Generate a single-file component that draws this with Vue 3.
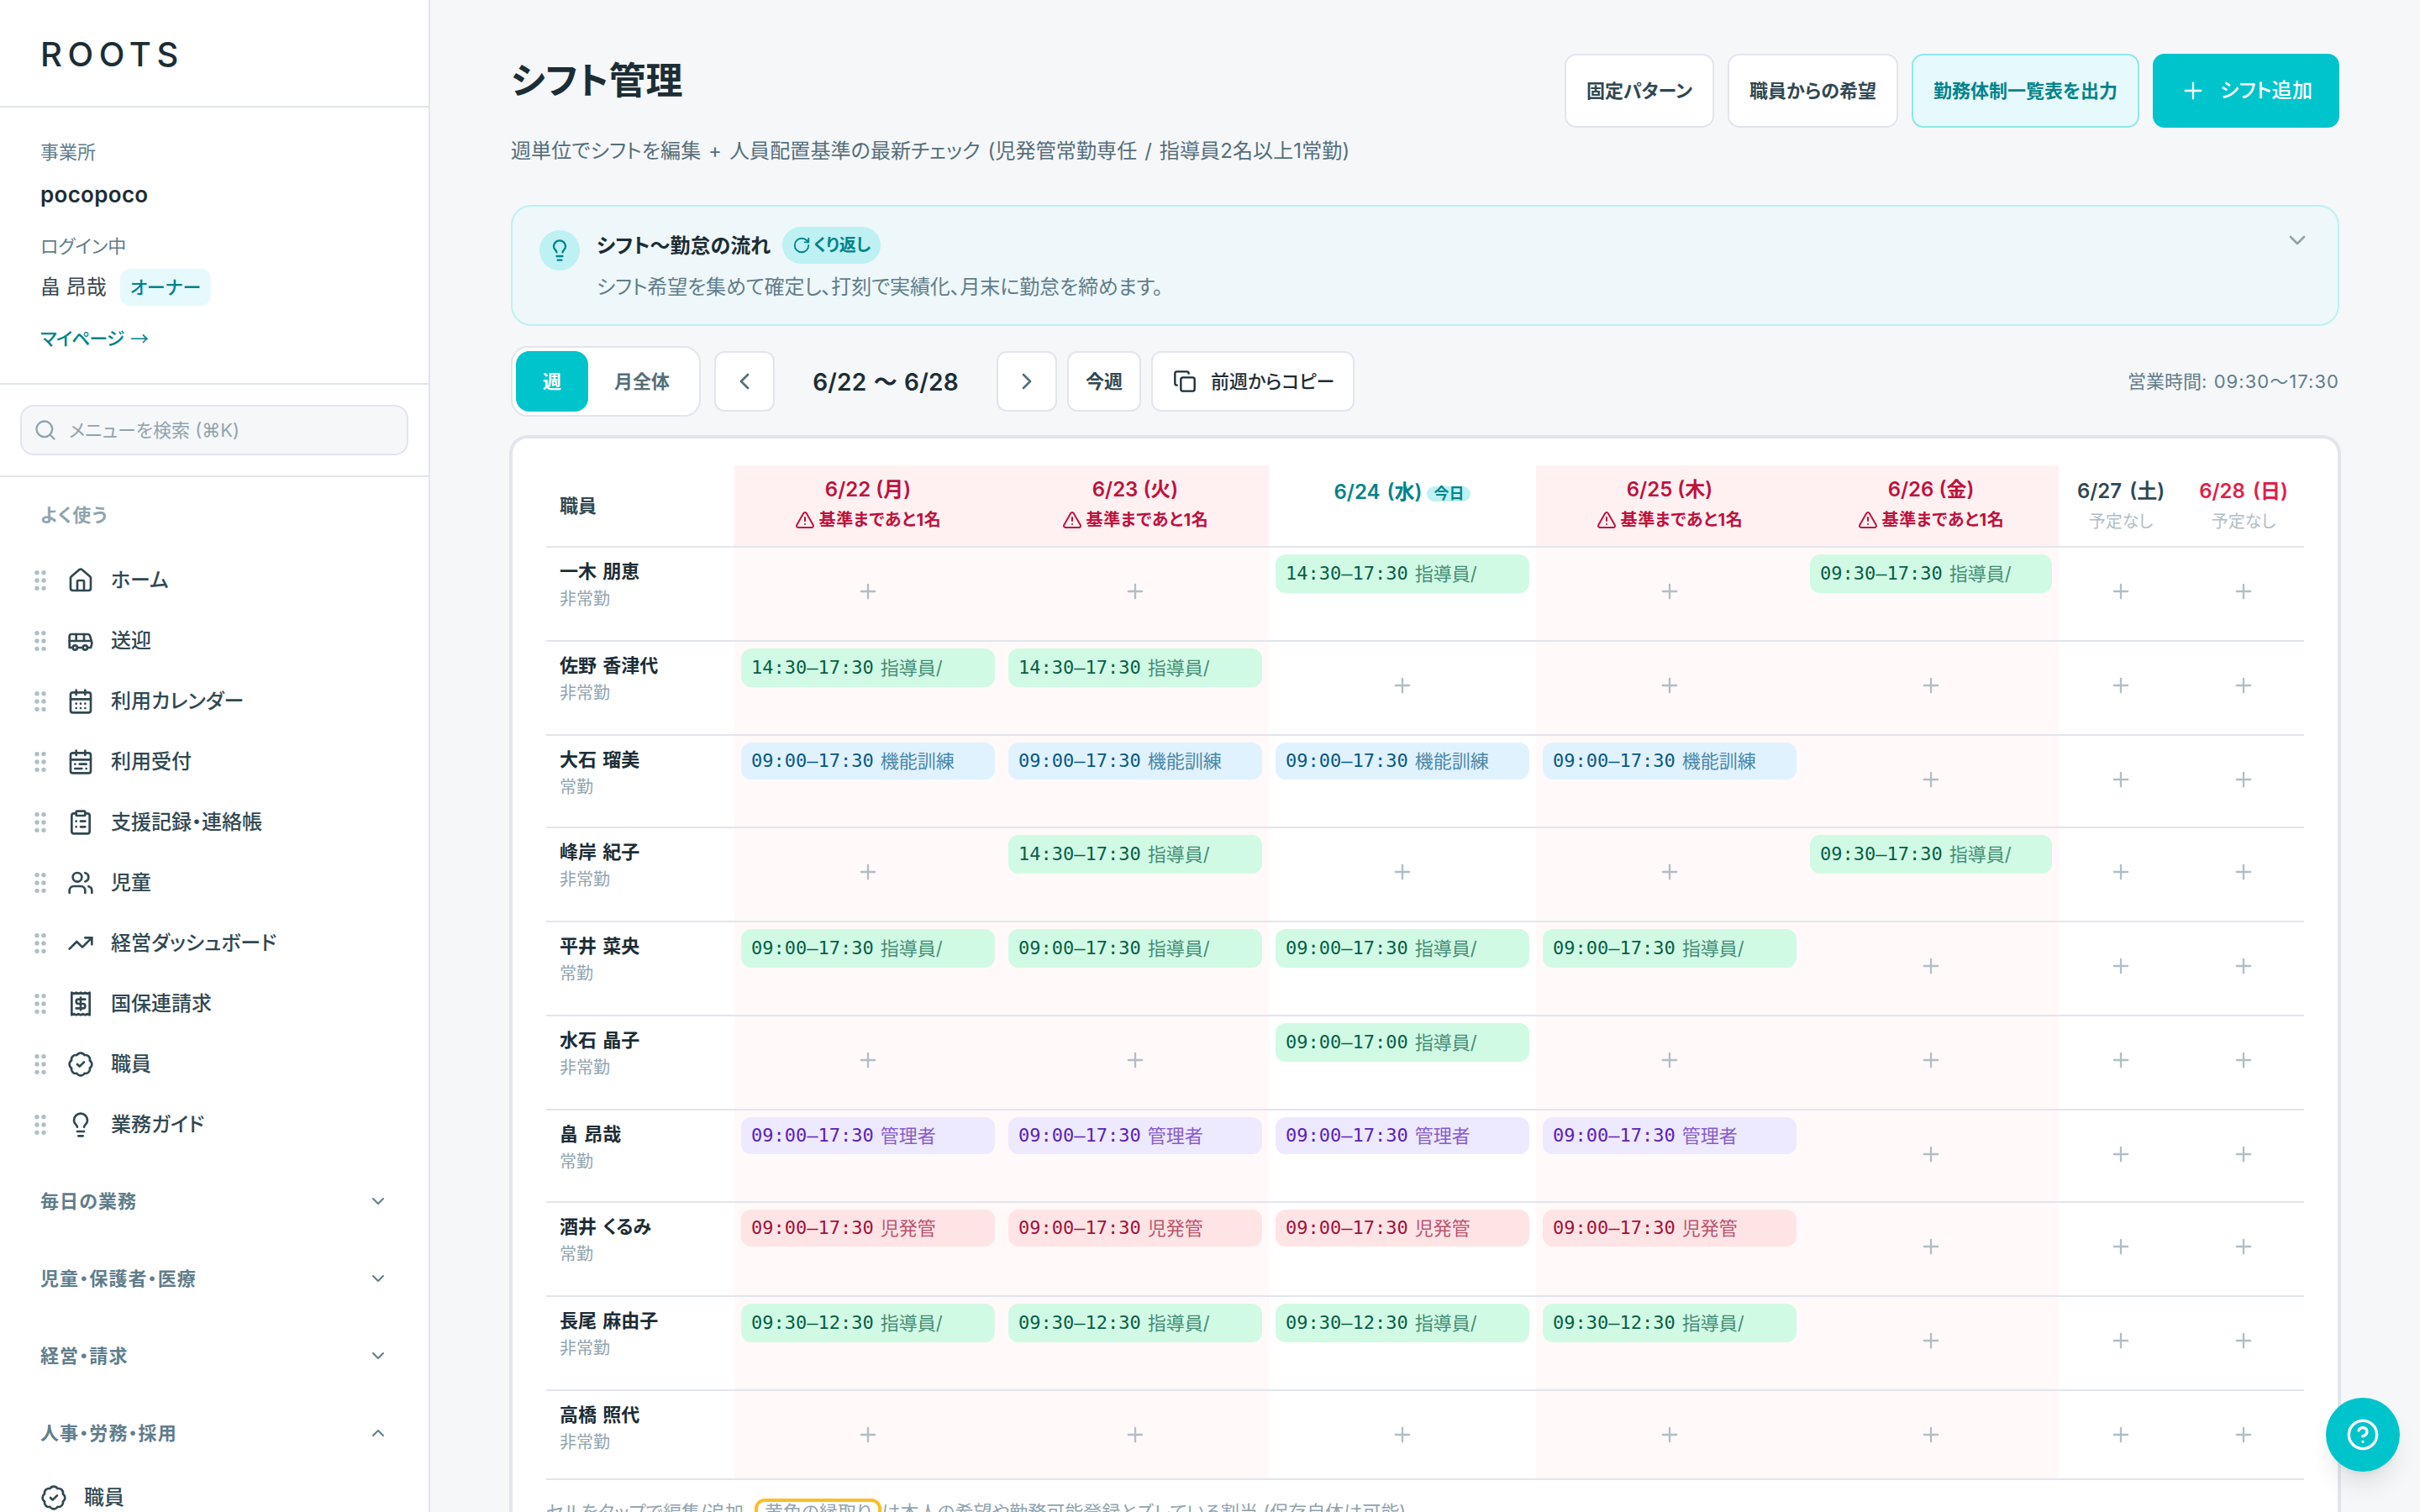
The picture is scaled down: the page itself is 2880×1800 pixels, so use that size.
<script setup>
	import { ref } from "vue";

	const icons = {
		home: '<path d="M15 21v-8a1 1 0 0 0-1-1h-4a1 1 0 0 0-1 1v8"/><path d="M3 10a2 2 0 0 1 .709-1.528l7-5.999a2 2 0 0 1 2.582 0l7 5.999A2 2 0 0 1 21 10v9a2 2 0 0 1-2 2H5a2 2 0 0 1-2-2z"/>',
		bus: '<path d="M8 6v6M15 6v6M2 12h19.6"/><path d="M18 18h3s.5-1.7.8-2.8c.1-.4.2-.8.2-1.2 0-.4-.1-.8-.2-1.2l-1.4-5C20.1 6.8 19.1 6 18 6H4a2 2 0 0 0-2 2v10h3"/><circle cx="7" cy="18" r="2"/><path d="M9 18h5"/><circle cx="16" cy="18" r="2"/>',
		calendar:
			'<path d="M8 2v4M16 2v4"/><rect width="18" height="18" x="3" y="4" rx="2"/><path d="M3 10h18M8 14h.01M12 14h.01M16 14h.01M8 18h.01M12 18h.01M16 18h.01"/>',
		reception:
			'<path d="M8 2v4M16 2v4"/><rect width="18" height="18" x="3" y="4" rx="2"/><path d="M3 10h18M17 14h-6M13 18H7M7 14h.01M17 18h.01"/>',
		clipboard:
			'<rect width="8" height="4" x="8" y="2" rx="1"/><path d="M16 4h2a2 2 0 0 1 2 2v14a2 2 0 0 1-2 2H6a2 2 0 0 1-2-2V6a2 2 0 0 1 2-2h2M12 11h4M12 16h4M8 11h.01M8 16h.01"/>',
		users: '<path d="M16 21v-2a4 4 0 0 0-4-4H6a4 4 0 0 0-4 4v2"/><circle cx="9" cy="7" r="4"/><path d="M22 21v-2a4 4 0 0 0-3-3.87M16 3.13a4 4 0 0 1 0 7.75"/>',
		trend: '<path d="m22 7-8.5 8.5-5-5L2 17"/><path d="M16 7h6v6"/>',
		receipt:
			'<path d="M4 2v20l2-1 2 1 2-1 2 1 2-1 2 1 2-1 2 1V2l-2 1-2-1-2 1-2-1-2 1-2-1-2 1Z"/><path d="M16 8h-6a2 2 0 1 0 0 4h4a2 2 0 1 1 0 4H8M12 17.5v-11"/>',
		badge: '<path d="M3.85 8.62a4 4 0 0 1 4.78-4.77 4 4 0 0 1 6.74 0 4 4 0 0 1 4.78 4.78 4 4 0 0 1 0 6.74 4 4 0 0 1-4.77 4.78 4 4 0 0 1-6.75 0 4 4 0 0 1-4.78-4.77 4 4 0 0 1 0-6.76Z"/><path d="m9 12 2 2 4-4"/>',
		bulb: '<path d="M15 14c.2-1 .7-1.7 1.5-2.5 1-.9 1.5-2.2 1.5-3.5A6 6 0 0 0 6 8c0 1 .2 2.2 1.5 3.5.7.7 1.3 1.5 1.5 2.5M9 18h6M10 22h4"/>',
		grip: '<circle cx="9" cy="5" r="1"/><circle cx="9" cy="12" r="1"/><circle cx="9" cy="19" r="1"/><circle cx="15" cy="5" r="1"/><circle cx="15" cy="12" r="1"/><circle cx="15" cy="19" r="1"/>',
		search: '<circle cx="11" cy="11" r="8"/><path d="m21 21-4.3-4.3"/>',
		down: '<path d="m6 9 6 6 6-6"/>',
		up: '<path d="m18 15-6-6-6 6"/>',
		left: '<path d="m15 18-6-6 6-6"/>',
		right: '<path d="m9 18 6-6-6-6"/>',
		plus: '<path d="M5 12h14M12 5v14"/>',
		repeat: '<path d="M21 12a9 9 0 1 1-9-9c2.52 0 4.93 1 6.74 2.74L21 8"/><path d="M21 3v5h-5"/>',
		copy: '<rect width="14" height="14" x="8" y="8" rx="2"/><path d="M4 16c-1.1 0-2-.9-2-2V4c0-1.1.9-2 2-2h10c1.1 0 2 .9 2 2"/>',
		alert: '<path d="m21.73 18-8-14a2 2 0 0 0-3.48 0l-8 14A2 2 0 0 0 4 21h16a2 2 0 0 0 1.73-3M12 9v4M12 17h.01"/>',
		help: '<circle cx="12" cy="12" r="10"/><path d="M9.09 9a3 3 0 0 1 5.83 1c0 2-3 3-3 3M12 17h.01"/>',
	};

	const favorites = [
		{ icon: "home", label: "ホーム" },
		{ icon: "bus", label: "送迎" },
		{ icon: "calendar", label: "利用カレンダー" },
		{ icon: "reception", label: "利用受付" },
		{ icon: "clipboard", label: "支援記録・連絡帳" },
		{ icon: "users", label: "児童" },
		{ icon: "trend", label: "経営ダッシュボード" },
		{ icon: "receipt", label: "国保連請求" },
		{ icon: "badge", label: "職員" },
		{ icon: "bulb", label: "業務ガイド" },
	];

	const sections = ref([
		{ title: "毎日の業務", open: false, items: [] },
		{ title: "児童・保護者・医療", open: false, items: [] },
		{ title: "経営・請求", open: false, items: [] },
		{
			title: "人事・労務・採用",
			open: true,
			items: [{ icon: "badge", label: "職員" }],
		},
	]);

	const view = ref("week");

	const days = [
		{ label: "6/22 (月)", short: 1 },
		{ label: "6/23 (火)", short: 1 },
		{ label: "6/24 (水)", today: true },
		{ label: "6/25 (木)", short: 1 },
		{ label: "6/26 (金)", short: 1 },
		{ label: "6/27 (土)", empty: true },
		{ label: "6/28 (日)", empty: true, sunday: true },
	];

	const shift = (time, role, color) => ({ time, role, color });
	const lead = (time) => shift(time, "指導員/", "green");
	const train = shift("09:00–17:30", "機能訓練", "blue");
	const admin = shift("09:00–17:30", "管理者", "purple");
	const chief = shift("09:00–17:30", "児発管", "red");
	const full = lead("09:00–17:30");
	const late = lead("14:30–17:30");
	const early = lead("09:30–12:30");

	const staff = [
		{
			name: "一木 朋恵",
			type: "非常勤",
			shifts: [null, null, late, null, lead("09:30–17:30"), null, null],
		},
		{
			name: "佐野 香津代",
			type: "非常勤",
			shifts: [late, late, null, null, null, null, null],
		},
		{
			name: "大石 瑠美",
			type: "常勤",
			tight: true,
			shifts: [train, train, train, train, null, null, null],
		},
		{
			name: "峰岸 紀子",
			type: "非常勤",
			shifts: [null, late, null, null, lead("09:30–17:30"), null, null],
		},
		{
			name: "平井 菜央",
			type: "常勤",
			shifts: [full, full, full, full, null, null, null],
		},
		{
			name: "水石 晶子",
			type: "非常勤",
			shifts: [null, null, lead("09:00–17:00"), null, null, null, null],
		},
		{
			name: "畠 昂哉",
			type: "常勤",
			tight: true,
			shifts: [admin, admin, admin, admin, null, null, null],
		},
		{
			name: "酒井 くるみ",
			type: "常勤",
			shifts: [chief, chief, chief, chief, null, null, null],
		},
		{
			name: "長尾 麻由子",
			type: "非常勤",
			shifts: [early, early, early, early, null, null, null],
		},
		{
			name: "高橋 照代",
			type: "非常勤",
			shifts: [null, null, null, null, null, null, null],
		},
	];
</script>

<template>
	<div class="app">
		<aside class="sidebar">
			<div class="brand">ROOTS</div>

			<div class="account">
				<div class="caption">事業所</div>
				<div class="office">pocopoco</div>
				<div class="caption login">ログイン中</div>
				<div class="user">
					<span>畠 昂哉</span>
					<span class="owner">オーナー</span>
				</div>
				<a class="mypage">マイページ <span class="arrow">→</span></a>
			</div>

			<div class="search-wrap">
				<div class="search">
					<svg class="icon s28" viewBox="0 0 24 24" v-html="icons.search"></svg>
					<span>メニューを検索 (⌘K)</span>
				</div>
			</div>

			<nav class="nav">
				<div class="nav-title">よく使う</div>
				<a v-for="f in favorites" :key="f.label" class="nav-item">
					<svg class="icon s32 grip" viewBox="0 0 24 24" v-html="icons.grip"></svg>
					<svg class="icon s32" viewBox="0 0 24 24" v-html="icons[f.icon]"></svg>
					<span>{{ f.label }}</span>
				</a>

				<div v-for="s in sections" :key="s.title" class="section">
					<button class="section-head" @click="s.open = !s.open">
						<span>{{ s.title }}</span>
						<svg
							class="icon s24"
							viewBox="0 0 24 24"
							v-html="s.open ? icons.up : icons.down"
						></svg>
					</button>
					<template v-if="s.open">
						<a v-for="i in s.items" :key="i.label" class="nav-item sub">
							<svg class="icon s32" viewBox="0 0 24 24" v-html="icons[i.icon]"></svg>
							<span>{{ i.label }}</span>
						</a>
					</template>
				</div>
			</nav>
		</aside>

		<main class="main">
			<header class="page-head">
				<div>
					<h1>シフト管理</h1>
					<p>
						週単位でシフトを編集 + 人員配置基準の最新チェック (児発管常勤専任 / 指導員2名以上1常勤)
					</p>
				</div>
				<div class="head-actions">
					<button class="btn">固定パターン</button>
					<button class="btn">職員からの希望</button>
					<button class="btn soft">勤務体制一覧表を出力</button>
					<button class="btn primary">
						<svg class="icon s32" viewBox="0 0 24 24" v-html="icons.plus"></svg>
						シフト追加
					</button>
				</div>
			</header>

			<section class="guide">
				<span class="guide-icon">
					<svg class="icon s28" viewBox="0 0 24 24" v-html="icons.bulb"></svg>
				</span>
				<div class="guide-body">
					<div class="guide-title">
						<strong>シフト〜勤怠の流れ</strong>
						<span class="repeat">
							<svg class="icon s22" viewBox="0 0 24 24" v-html="icons.repeat"></svg>
							くり返し
						</span>
					</div>
					<p>シフト希望を集めて確定し、打刻で実績化、月末に勤怠を締めます。</p>
				</div>
				<svg class="icon s32 guide-toggle" viewBox="0 0 24 24" v-html="icons.down"></svg>
			</section>

			<div class="toolbar">
				<div class="segment">
					<button :class="{ active: view === 'week' }" @click="view = 'week'">週</button>
					<button :class="{ active: view === 'month' }" @click="view = 'month'">
						月全体
					</button>
				</div>
				<div class="pager">
					<button class="tool square">
						<svg class="icon s32" viewBox="0 0 24 24" v-html="icons.left"></svg>
					</button>
					<span class="range">6/22 〜 6/28</span>
					<button class="tool square">
						<svg class="icon s32" viewBox="0 0 24 24" v-html="icons.right"></svg>
					</button>
					<button class="tool today">今週</button>
					<button class="tool copy">
						<svg class="icon s28" viewBox="0 0 24 24" v-html="icons.copy"></svg>
						前週からコピー
					</button>
				</div>
				<span class="hours">営業時間<span>: 09:30〜17:30</span></span>
			</div>

			<section class="card">
				<table>
					<colgroup>
						<col class="c-name" />
						<col class="c-day" span="4" />
						<col class="c-fri" />
						<col class="c-sat" />
						<col class="c-sun" />
					</colgroup>
					<thead>
						<tr>
							<th class="name-head">職員</th>
							<th
								v-for="d in days"
								:key="d.label"
								:class="{ lack: d.short, today: d.today, rest: d.empty, sunday: d.sunday }"
							>
								<div class="date">
									{{ d.label }}<span v-if="d.today" class="now">今日</span>
								</div>
								<div v-if="d.short" class="warn">
									<svg class="icon s24" viewBox="0 0 24 24" v-html="icons.alert"></svg>
									基準まであと{{ d.short }}名
								</div>
								<div v-if="d.empty" class="none">予定なし</div>
							</th>
						</tr>
					</thead>
					<tbody>
						<tr v-for="p in staff" :key="p.name" :class="{ tight: p.tight }">
							<td class="person">
								<div class="person-name">{{ p.name }}</div>
								<div class="person-type">{{ p.type }}</div>
							</td>
							<td v-for="(s, i) in p.shifts" :key="i" :class="{ lack: days[i].short }">
								<div v-if="s" class="chip" :class="s.color">
									<span class="time">{{ s.time }}</span>
									<span class="role">{{ s.role }}</span>
								</div>
								<button v-else class="add">
									<svg class="icon s28" viewBox="0 0 24 24" v-html="icons.plus"></svg>
								</button>
							</td>
						</tr>
					</tbody>
				</table>
				<p class="note">
					<span>セルをタップで編集/追加。</span><span class="mark">黄色の縁取り</span
					><span>は本人の希望や勤務可能登録とズレている割当 (保存自体は可能)</span>
				</p>
			</section>
		</main>

		<button class="fab">
			<svg class="icon s40" viewBox="0 0 24 24" v-html="icons.help"></svg>
		</button>
	</div>
</template>

<style>
	body {
		background: #f5f7f9;
		overflow: hidden;
	}
</style>

<style scoped>
	.app {
		display: flex;
		height: 100vh;
		overflow: hidden;
		background: #f5f7f9;
		color: #1c2d35;
		font-family: Inter, "Noto Sans CJK JP", sans-serif;
		font-size: 24px;
		font-feature-settings: "palt";
		line-height: 36px;
	}
	.app * {
		box-sizing: border-box;
	}
	button {
		font: inherit;
		font-feature-settings: inherit;
		color: inherit;
		border: none;
		background: none;
		padding: 0;
		cursor: pointer;
		white-space: nowrap;
	}
	p,
	h1 {
		margin: 0;
	}

	.icon {
		display: block;
		flex: none;
		fill: none;
		stroke: currentColor;
		stroke-width: 2;
		stroke-linecap: round;
		stroke-linejoin: round;
	}
	.s22 {
		width: 22px;
		height: 22px;
	}
	.s24 {
		width: 24px;
		height: 24px;
	}
	.s28 {
		width: 28px;
		height: 28px;
	}
	.s32 {
		width: 32px;
		height: 32px;
	}
	.s40 {
		width: 40px;
		height: 40px;
	}

	/* Sidebar */
	.sidebar {
		flex: none;
		width: 512px;
		background: #fff;
		border-right: 2px solid #e2e5ec;
		overflow: hidden;
	}
	.brand {
		height: 128px;
		padding-left: 48px;
		border-bottom: 2px solid #e1e6ea;
		font-size: 40px;
		font-weight: 500;
		letter-spacing: 6.6px;
		line-height: 129px;
	}
	.account {
		height: 330px;
		padding: 35px 48px 0;
		border-bottom: 2px solid #e2e5ec;
	}
	.caption {
		font-size: 22px;
		color: #607d8b;
	}
	.office {
		margin-top: 13px;
		font-size: 26px;
		font-weight: 600;
		letter-spacing: 0.3px;
		line-height: 40px;
	}
	.login {
		margin-top: 23px;
	}
	.user {
		display: flex;
		align-items: center;
		gap: 16px;
		margin-top: 9px;
		color: #37474f;
	}
	.owner {
		height: 44px;
		padding: 0 12px;
		border-radius: 12px;
		background: #e6f9fc;
		color: #00838a;
		font-size: 22px;
		font-weight: 500;
		line-height: 44px;
	}
	.mypage {
		display: block;
		margin-top: 19px;
		color: #00838a;
		font-size: 22px;
		font-weight: 500;
		letter-spacing: -1px;
	}
	.arrow {
		margin-left: 3px;
		font-family: "Noto Sans CJK JP", sans-serif;
		font-weight: 400;
	}
	.search-wrap {
		height: 110px;
		padding: 24px;
		border-bottom: 2px solid #e2e5ec;
	}
	.search {
		display: flex;
		align-items: center;
		gap: 14px;
		height: 60px;
		padding-left: 14px;
		border: 2px solid #e2e5ec;
		border-radius: 16px;
		background: #f5f7f9;
		color: #90a4ae;
		font-size: 22px;
	}
	.nav-title {
		padding: 27px 48px 24px;
		color: #90a4ae;
		font-size: 22px;
		font-weight: 600;
		letter-spacing: 1.1px;
	}
	.nav-item {
		display: flex;
		align-items: center;
		height: 72px;
		padding-left: 32px;
		color: #304852;
		font-weight: 500;
	}
	.nav-item span {
		margin-left: 20px;
	}
	.nav-item .grip {
		margin-right: 16px;
		color: #b0bec5;
	}
	.nav-item.sub {
		margin-top: 4px;
		padding-left: 48px;
	}
	.section {
		padding-top: 20px;
	}
	.section-head {
		display: flex;
		align-items: center;
		justify-content: space-between;
		width: 100%;
		height: 72px;
		padding: 0 48px 2px;
		color: #607d8b;
		font-size: 22px;
		font-weight: 700;
		letter-spacing: 1.1px;
	}

	/* Page */
	.main {
		flex: 1;
		min-width: 0;
		padding: 64px 96px 0;
	}
	.page-head {
		display: flex;
		justify-content: space-between;
		height: 180px;
	}
	h1 {
		font-size: 44px;
		font-weight: 700;
		line-height: 64px;
	}
	.page-head p {
		margin-top: 34px;
		color: #546e7a;
		letter-spacing: 0.12px;
		word-spacing: 2px;
		white-space: nowrap;
	}
	.head-actions {
		display: flex;
		gap: 16px;
		height: 88px;
	}
	.btn {
		padding: 0 24px;
		border: 2px solid #e2e5ec;
		border-radius: 14px;
		background: #fff;
		color: #304852;
		font-size: 22px;
		font-weight: 700;
	}
	.btn.soft {
		border-color: #8ee8ea;
		background: #e6f9fc;
		color: #00838a;
	}
	.btn.primary {
		display: flex;
		align-items: center;
		gap: 16px;
		width: 222px;
		padding: 0 0 0 32px;
		border: none;
		background: #00c4cc;
		color: #fff;
		font-size: 24px;
		font-weight: 500;
		letter-spacing: 0.3px;
	}
	.btn.primary .icon {
		stroke-width: 1.75;
	}

	.guide {
		display: flex;
		height: 144px;
		padding: 24px 32px;
		border: 2px solid #bdf1f3;
		border-radius: 24px;
		background: #eef7f9;
	}
	.guide-icon {
		display: flex;
		align-items: center;
		justify-content: center;
		flex: none;
		width: 48px;
		height: 48px;
		margin-top: 4px;
		border-radius: 50%;
		background: #bdf1f3;
		color: #00838a;
	}
	.guide-body {
		flex: 1;
		margin-left: 20px;
	}
	.guide-title {
		display: flex;
		align-items: center;
		gap: 14px;
		height: 44px;
	}
	.guide-title strong {
		padding-top: 2px;
	}
	.repeat {
		display: flex;
		align-items: center;
		gap: 3px;
		height: 44px;
		padding: 0 12px;
		border-radius: 22px;
		background: #bdf1f3;
		color: #00838a;
		font-size: 20px;
		font-weight: 700;
	}
	.guide-body p {
		margin-top: 10px;
		color: #607d8b;
		letter-spacing: -0.14px;
	}
	.guide-toggle {
		color: #90a4ae;
	}

	.toolbar {
		display: flex;
		align-items: center;
		gap: 16px;
		height: 84px;
		margin: 24px 0;
	}
	.segment {
		display: flex;
		width: 226px;
		height: 84px;
		padding: 4px;
		border: 2px solid #e2e5ec;
		border-radius: 20px;
		background: #fff;
	}
	.segment button {
		flex: 1;
		height: 72px;
		border-radius: 16px;
		color: #546e7a;
		font-size: 22px;
		font-weight: 700;
	}
	.segment button:first-child {
		flex: none;
		width: 86px;
	}
	.segment .active {
		background: #00c4cc;
		color: #fff;
	}
	.pager {
		display: flex;
		align-items: center;
		gap: 12px;
	}
	.tool {
		height: 72px;
		border: 2px solid #e2e5ec;
		border-radius: 12px;
		background: #fff;
		color: #304852;
		font-size: 22px;
	}
	.square {
		display: flex;
		align-items: center;
		justify-content: center;
		width: 72px;
		color: #546e7a;
	}
	.range {
		width: 240px;
		padding-top: 1px;
		font-size: 28px;
		font-weight: 600;
		letter-spacing: 0.2px;
		word-spacing: 1px;
		text-align: center;
		white-space: nowrap;
	}
	.tool.today {
		width: 88px;
		font-weight: 700;
	}
	.tool.copy {
		display: flex;
		align-items: center;
		gap: 17px;
		width: 242px;
		padding-left: 24px;
		color: #1c2d35;
		font-weight: 500;
	}
	.hours {
		margin-left: auto;
		color: #607d8b;
		font-size: 22px;
	}
	.hours span {
		letter-spacing: 1.05px;
	}

	/* Shift table */
	.card {
		height: 1400px;
		padding: 32px 40px;
		border: 2px solid #e2e5ec;
		border-radius: 20px;
		background: #fff;
		box-shadow: 0 0 0 2px #e2e5ec;
	}
	table {
		width: 2092px;
		table-layout: fixed;
		border-collapse: separate;
		border-spacing: 0;
	}
	.c-name {
		width: 224px;
	}
	.c-day {
		width: 318px;
	}
	.c-fri {
		width: 304px;
	}
	.c-sat {
		width: 148px;
	}
	.c-sun {
		width: 144px;
	}
	th {
		height: 98px;
		padding: 11px 0 0;
		border-bottom: 2px solid #e2e5ec;
		color: #304852;
		font-weight: 600;
		text-align: center;
		vertical-align: top;
		white-space: nowrap;
	}
	.name-head {
		padding: 0 0 0 16px;
		font-size: 22px;
		text-align: left;
		vertical-align: middle;
	}
	th.lack {
		background: #fff1f2;
		color: #be123c;
	}
	th.today {
		padding-top: 14px;
		color: #00838a;
		word-spacing: 2px;
	}
	th.rest {
		padding-top: 13px;
	}
	th.rest .date {
		word-spacing: 3px;
	}
	th.sunday {
		color: #e11d48;
	}
	.now {
		display: inline-block;
		height: 18px;
		margin-left: 6px;
		padding: 0 8px;
		border-radius: 9px;
		background: #bdf1f3;
		font-size: 18px;
		line-height: 18px;
	}
	.warn {
		display: flex;
		align-items: center;
		justify-content: center;
		gap: 5px;
		font-size: 20px;
		font-weight: 700;
		letter-spacing: 0.6px;
	}
	.none {
		color: #b0bec5;
		font-size: 20px;
		font-weight: 400;
	}

	td {
		height: 112px;
		padding: 8px;
		border-bottom: 2px solid #e2e5ec;
		vertical-align: top;
	}
	.tight td {
		height: 110px;
	}
	tbody tr:last-child td {
		height: 106px;
	}
	td.lack {
		background: #fff9f9;
	}
	td.person {
		padding: 12px 16px 0;
	}
	.person-name {
		font-size: 22px;
		font-weight: 700;
		line-height: 32px;
		word-spacing: 2px;
	}
	.person-type {
		color: #90a4ae;
		font-size: 20px;
		line-height: 34px;
	}
	.chip {
		display: flex;
		align-items: center;
		gap: 8px;
		height: 46px;
		padding: 0 12px;
		border-radius: 12px;
		font-size: 22px;
		white-space: nowrap;
	}
	.time {
		font-family: "DejaVu Sans Mono", monospace;
	}
	.role {
		opacity: 0.7;
	}
	.green {
		background: #d1fae5;
		color: #065f46;
	}
	.blue {
		height: 44px;
		background: #e0f2fe;
		color: #075985;
	}
	.purple {
		height: 44px;
		background: #ede9fe;
		color: #5b21b6;
	}
	.red {
		height: 44px;
		background: #ffe4e6;
		color: #9f1239;
	}
	.add {
		display: flex;
		align-items: center;
		justify-content: center;
		width: 100%;
		height: 88px;
		color: #b0bec5;
	}
	.note {
		display: flex;
		align-items: center;
		margin-top: 20px;
		color: #90a4ae;
		font-size: 22px;
		white-space: nowrap;
	}
	.mark {
		margin-left: 2px;
		padding: 0 8px;
		border: 4px solid #fbbf24;
		border-radius: 12px;
		line-height: 24px;
	}

	.fab {
		position: fixed;
		right: 24px;
		bottom: 48px;
		display: flex;
		align-items: center;
		justify-content: center;
		width: 88px;
		height: 88px;
		border-radius: 50%;
		background: #00c4cc;
		color: #fff;
		box-shadow:
			0 20px 30px -6px rgba(0, 0, 0, 0.1),
			0 8px 12px -8px rgba(0, 0, 0, 0.1);
	}
</style>
